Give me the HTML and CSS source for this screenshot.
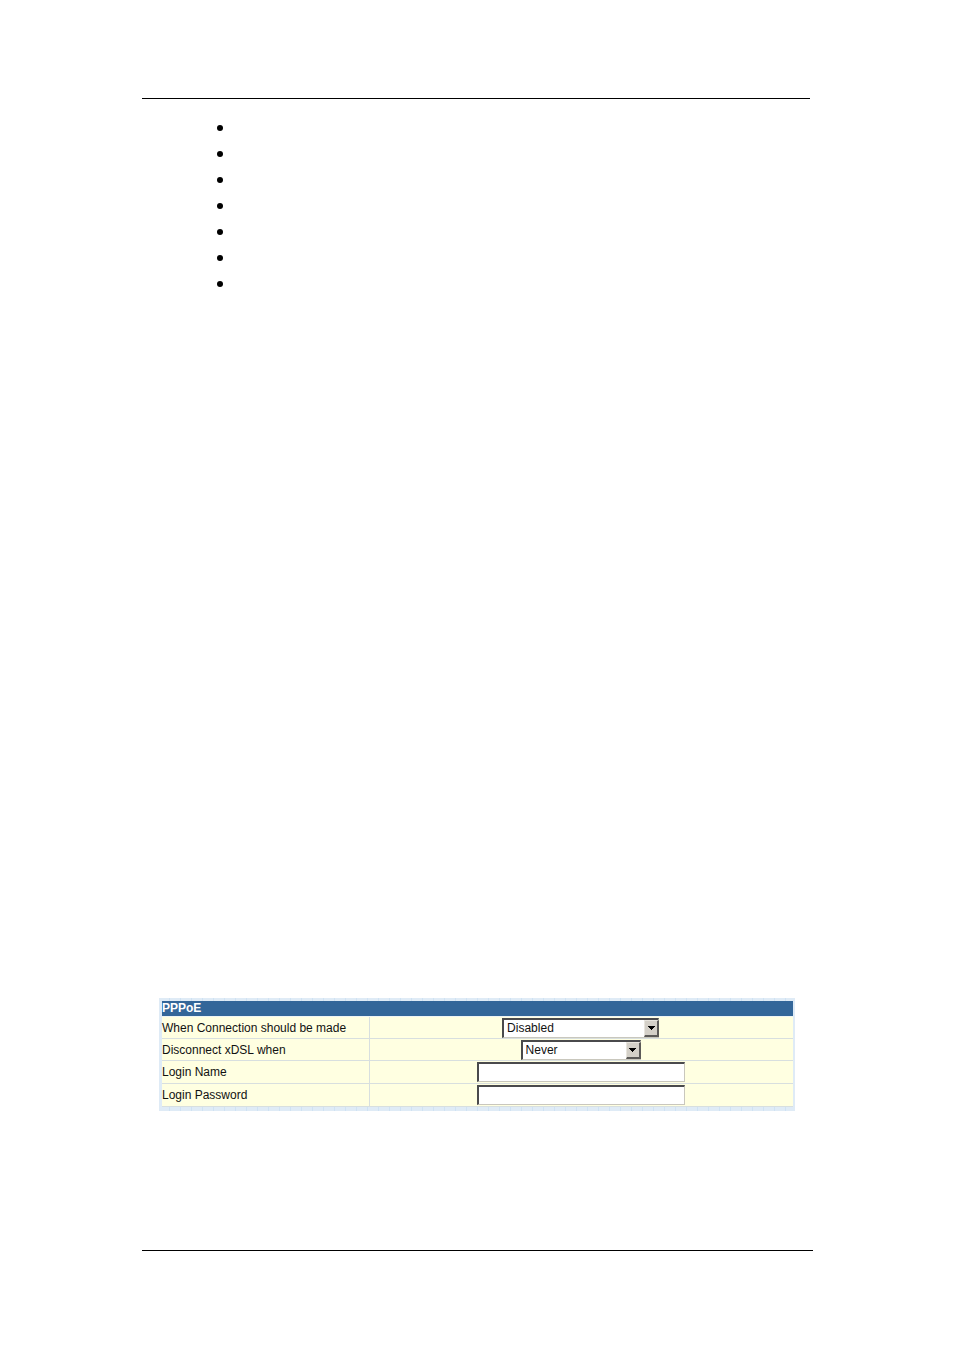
FILE: index.html
```html
<!DOCTYPE html>
<html lang="en">
<head>
<meta charset="utf-8">
<meta name="viewport" content="width=device-width, initial-scale=1">
<title>PPPoE</title>
<link rel="stylesheet" href="styles.css">
</head>
<body>
<main class="page">
  <hr class="rule rule-top">
  <ul class="bullets">
    <li></li><li></li><li></li><li></li><li></li><li></li><li></li>
  </ul>
  <form class="panel">
    <table class="settings">
      <colgroup>
        <col class="col-name">
        <col>
      </colgroup>
      <thead>
        <tr><th colspan="2" scope="colgroup">PPPoE</th></tr>
      </thead>
      <tbody>
        <tr>
          <td class="name"><label for="connect">When Connection should be made</label></td>
          <td class="value">
            <span class="picker picker-wide">
              <select id="connect"><option>Disabled</option></select>
              <span class="drop"><svg viewBox="0 0 7 4" width="7" height="4" shape-rendering="crispEdges"><path d="M0 0h7v1h-1v1h-1v1h-1v1h-1v-1h-1v-1h-1v-1h-1z"/></svg></span>
            </span>
          </td>
        </tr>
        <tr>
          <td class="name"><label for="disconnect">Disconnect xDSL when</label></td>
          <td class="value">
            <span class="picker">
              <select id="disconnect"><option>Never</option></select>
              <span class="drop"><svg viewBox="0 0 7 4" width="7" height="4" shape-rendering="crispEdges"><path d="M0 0h7v1h-1v1h-1v1h-1v1h-1v-1h-1v-1h-1v-1h-1z"/></svg></span>
            </span>
          </td>
        </tr>
        <tr class="tall">
          <td class="name"><label for="login">Login Name</label></td>
          <td class="value"><input class="field" id="login" type="text"></td>
        </tr>
        <tr class="tall">
          <td class="name"><label for="password">Login Password</label></td>
          <td class="value"><input class="field" id="password" type="password"></td>
        </tr>
      </tbody>
    </table>
  </form>
  <hr class="rule">
</main>
</body>
</html>
```
FILE: styles.css
```css
* {
  box-sizing: border-box;
}

body {
  margin: 0;
  background: #fff;
  font-family: "Liberation Sans", Arial, sans-serif;
  font-size: 12px;
  color: #111;
}

.page {
  display: flex;
  flex-direction: column;
  min-height: 100vh;
  padding: 98px 141px 100px 142px;
}

.rule {
  width: 100%;
  height: 1px;
  margin: 0;
  border: 0;
  background: #000;
}

.rule-top {
  width: auto;
  margin-right: 3px;
}

.bullets {
  display: grid;
  gap: 20px;
  margin: 26px 0 0 75px;
  padding: 0;
  list-style: none;
}

.bullets li {
  width: 6px;
  height: 6px;
  border-radius: 50%;
  background: #000;
}

.panel {
  margin: auto 18px 139px 17px;
  padding: 3px 2px 4px 3px;
  background: repeating-linear-gradient(90deg, #dfebf6 0 10px, #cfe2f3 10px 11px);
}

.settings {
  width: 100%;
  border-collapse: separate;
  border-spacing: 0;
  table-layout: fixed;
  background: #ffffe1;
}

.col-name {
  width: 33%;
}

.settings th {
  height: 16px;
  padding: 0;
  border-bottom: 1px solid #eef4f4;
  background: #336699;
  background-clip: padding-box;
  color: #fff;
  font-size: 12px;
  line-height: 15px;
  text-align: left;
}

.settings td {
  height: 22px;
  padding: 0;
  border-bottom: 1px solid #d8dfdf;
  vertical-align: middle;
}

.settings .tall td {
  height: 23px;
}

.settings .name {
  border-right: 1px solid #d8dfdf;
}

.settings .value {
  padding-right: 2px;
}

.name label {
  display: block;
  line-height: 20px;
  white-space: nowrap;
}

.picker {
  display: block;
  position: relative;
  width: 120px;
  height: 20px;
  margin: 0 auto;
}

.picker-wide {
  width: 157px;
}

.picker select,
.field {
  display: block;
  height: 20px;
  border: 1px solid #c9c7bd;
  border-top: 2px solid #4a4a4c;
  border-left: 2px solid #4a4a4c;
  border-radius: 0;
  background: #fff;
  color: #111;
  font: inherit;
}

.picker select {
  width: 100%;
  padding: 0 18px 0 3px;
  appearance: none;
}

.field {
  width: 208px;
  margin: 0 auto;
  padding: 0 2px;
}

.drop {
  display: flex;
  position: absolute;
  top: 2px;
  right: 0;
  width: 15px;
  height: 17px;
  align-items: center;
  justify-content: center;
  border: 1px solid #e8e5de;
  border-right: 2px solid #5c5a58;
  border-bottom: 2px solid #5c5a58;
  background: #d4d0c8;
  pointer-events: none;
}
```
